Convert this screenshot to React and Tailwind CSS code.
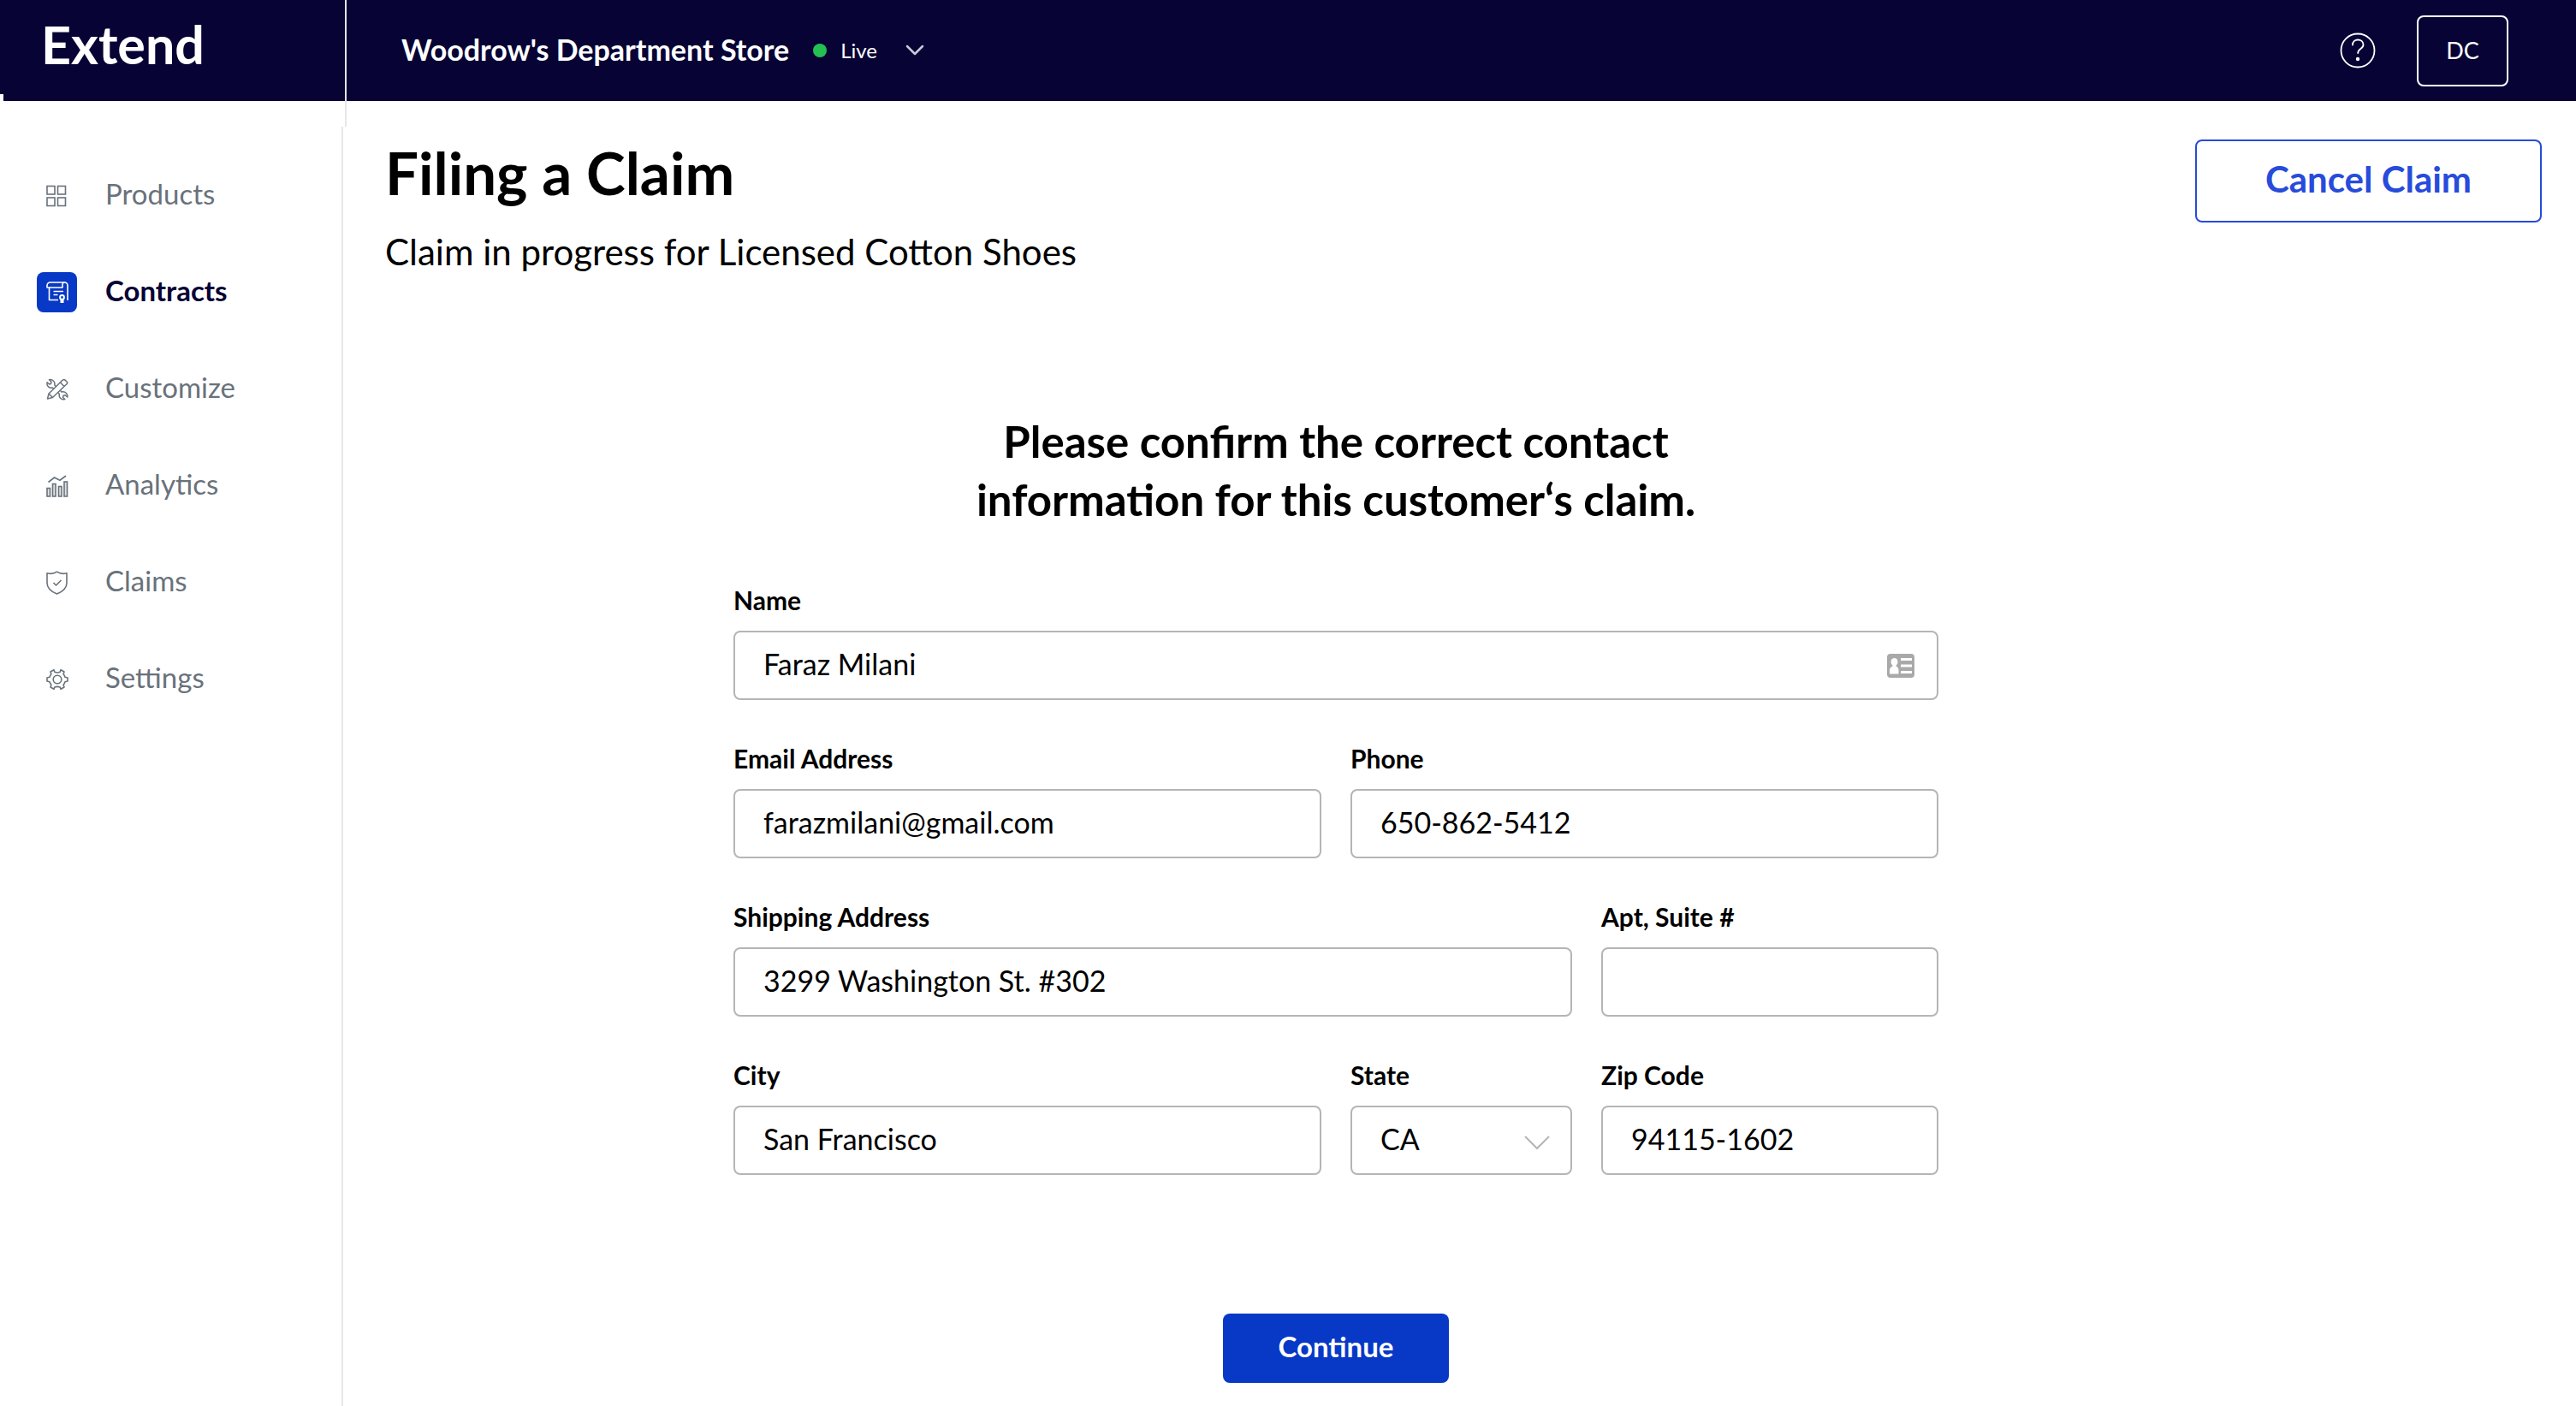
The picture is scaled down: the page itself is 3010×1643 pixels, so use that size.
import { useState } from 'react'

function ProductsIcon() {
  return (
    <svg width="26" height="26" viewBox="0 0 26 26" fill="none" stroke="currentColor" strokeWidth="1.600" aria-hidden="true">
      <rect x="1" y="1.500" width="9" height="9.500" />
      <rect x="13.500" y="1.500" width="9" height="9.500" />
      <rect x="1" y="15" width="9" height="9.500" />
      <rect x="13.500" y="15" width="9" height="9.500" />
    </svg>
  )
}

function ContractsIcon() {
  return (
    <svg width="26" height="26" viewBox="0 0 26 26" fill="none" stroke="currentColor" strokeWidth="1.600" strokeLinejoin="round" aria-hidden="true">
      <path d="M3.500 7H1V4.500A3.500 3.500 0 0 1 4.500 1h17A3.500 3.500 0 0 1 25 4.500V22" />
      <path d="M21.500 1a2.500 2.500 0 0 0-2.500 2.500V7H3.500v14.500H14" />
      <path d="M8.500 11.500h11.500M8.500 15.500h5" />
      <circle cx="18.500" cy="18.500" r="2.400" strokeWidth="2" />
      <path d="M17.500 21v4M19.500 21v4" strokeWidth="2" />
    </svg>
  )
}

function CustomizeIcon() {
  return (
    <svg width="26" height="26" viewBox="0 0 26 26" fill="none" stroke="currentColor" strokeWidth="1.500" strokeLinejoin="round" aria-hidden="true">
      <path d="M1.500 24l1.500-6L18 3.200l1.800-1.400c.8-.5 1.500-.4 2.200.3l2.200 2.200c.7.700.7 1.500 0 2.200L7.500 22.500z" />
      <path d="M16.500 5l4.500 4.500M3 18l4.500 4.500" />
      <path d="M11.300 9.500L9.800 8c.4-2-.1-3.800-1.500-5C6.800 1.500 4.800 1.300 3.500 1.700L6 4.200 5.500 6.500 3.500 7 1.200 4.800C.6 6.800 1.300 9 2.800 10.200c1.300 1 3 1.300 4.500.8l1.500 1.300" />
      <path d="M16.500 14.500l1.500 1.500c2-.4 4 0 5.200 1.300 1.500 1.400 1.900 3.200 1.500 4.700L22.200 19.700l-2.200.500-.5 2 2.300 2.300c-2 .6-4.200 0-5.500-1.500-1.100-1.300-1.300-3-.8-4.500L14 17" />
    </svg>
  )
}

function AnalyticsIcon() {
  return (
    <svg width="26" height="26" viewBox="0 0 26 26" fill="none" stroke="currentColor" strokeWidth="1.600" aria-hidden="true">
      <path d="M2.500 8.500L9.500 3l6.500 3.200L23 1" />
      <g fill="#dfe1e3">
        <rect x="1" y="15.500" width="3.500" height="9.500" />
        <rect x="7.500" y="10.500" width="3.500" height="14.500" />
        <rect x="14.500" y="13.500" width="3.500" height="11.500" />
        <rect x="21" y="8" width="3.500" height="17" />
      </g>
    </svg>
  )
}

function ClaimsIcon() {
  return (
    <svg width="26" height="28" viewBox="0 0 26 28" fill="none" stroke="currentColor" strokeWidth="1.600" strokeLinejoin="round" aria-hidden="true">
      <path d="M12.500 1.200c-3 2-7.500 2.600-11.500 1.600V14c0 6 5 10.500 11.500 13C19 24.500 24 20 24 14V2.800c-4 1-8.500.4-11.500-1.600z" />
      <path d="M8.500 14l3 3 6-6" />
    </svg>
  )
}

function SettingsIcon() {
  return (
    <svg width="26" height="26" viewBox="0 0 26 26" fill="none" stroke="currentColor" strokeWidth="1.600" strokeLinejoin="round" aria-hidden="true">
      <path d="M9.800 4.300L9 1.700 5 4l.9 2.700C5 7.700 4.400 8.800 4 10.300L1 11v4l3 .7c.4 1.500 1 2.600 1.900 3.600L5 22l4 2.300.8-2.300c2-.8 4.400-.8 6.400 0l.8 2.300L21 22l-.9-2.700c.9-1 1.500-2.100 1.900-3.600l3-.7v-4l-3-.7c-.4-1.500-1-2.600-1.900-3.600L21 4l-4-2.300-.8 2.600c-2 .8-4.400.8-6.400 0z" />
      <circle cx="13" cy="13" r="4.800" />
    </svg>
  )
}

function HelpIcon() {
  return (
    <svg width="42" height="42" viewBox="0 0 42 42" fill="none" stroke="currentColor" strokeWidth="1.800" strokeLinecap="round" aria-hidden="true">
      <circle cx="21" cy="21" r="19.500" />
      <path d="M15 14.500c0-4 3-6 6.200-6s6.300 2 6.300 5.700c0 5.300-6.300 4.300-6.300 9.800" />
      <circle cx="21" cy="31" r="1.300" fill="currentColor" />
    </svg>
  )
}

function ContactCardIcon() {
  return (
    <svg width="32" height="28" viewBox="0 0 32 28" aria-hidden="true">
      <rect width="32" height="28" rx="4" fill="#a9a9a9" />
      <g fill="#fff">
        <ellipse cx="8.500" cy="9.500" rx="4" ry="4.500" />
        <path d="M6.500 12h4v2.500c2 .8 3 2.500 3 5V23.500H3V19.500c0-2.500 1.300-4.200 3.500-5z" />
        <rect x="16" y="5" width="13" height="3" />
        <rect x="16" y="12.500" width="13" height="3" />
        <rect x="16" y="20" width="13" height="3" />
      </g>
    </svg>
  )
}

const navItems = [
  { label: 'Products', icon: ProductsIcon },
  { label: 'Contracts', icon: ContractsIcon, active: true },
  { label: 'Customize', icon: CustomizeIcon },
  { label: 'Analytics', icon: AnalyticsIcon },
  { label: 'Claims', icon: ClaimsIcon },
  { label: 'Settings', icon: SettingsIcon }
]

const inputClass =
  'block w-full h-[81px] px-[33px] pb-1 rounded-lg border-2 border-[#b5b5b5] bg-white text-[34px] text-black'

function Field({ id, label, className, children, ...props }) {
  return (
    <div className={className}>
      <label htmlFor={id} className="block h-[54px] text-[30px] leading-[36px] font-bold">
        {label}
      </label>
      <div className="relative">
        {children || <input id={id} className={inputClass} {...props} />}
      </div>
    </div>
  )
}

function Header() {
  return (
    <header className="flex text-white">
      <div className="w-1 h-[110px] bg-[#070435]" />
      <div className="w-[401px] h-[118px] shrink-0 border-r-2 border-[#e1e3e8] bg-[#070435] pl-11">
        <a href="#" className="block pt-4 text-[61px] leading-[72px] font-bold">Extend</a>
      </div>
      <div className="flex-1 h-[118px] bg-[#070435] flex items-center justify-between pl-16 pr-[79px]">
        <button className="flex items-center">
          <span className="pb-1 text-[34px] font-bold">Woodrow's Department Store</span>
          <span className="ml-7 mr-4 size-4 rounded-full bg-[#25c052]" />
          <span className="text-[24px]">Live</span>
          <svg className="ml-8" width="24" height="14" viewBox="0 0 24 14" fill="none" stroke="#c9cbd8" strokeWidth="2.500" strokeLinecap="round" strokeLinejoin="round" aria-hidden="true">
            <path d="M3 2l9 9 9-9" />
          </svg>
        </button>
        <div className="flex items-center gap-12">
          <button aria-label="Help">
            <HelpIcon />
          </button>
          <button className="w-[107px] h-[83px] rounded-lg border-2 border-white text-[27px]">DC</button>
        </div>
      </div>
    </header>
  )
}

function Sidebar() {
  return (
    <aside className="w-[405px] shrink-0 flex flex-col">
      <div className="h-[30px] border-r-2 border-[#e6e7eb]" />
      <nav className="flex-1 w-[401px] pt-6 border-r-2 border-[#e6e7eb]">
        {navItems.map(({ label, icon: Icon, active }) => (
          <a
            key={label}
            href="#"
            className={
              active
                ? 'flex items-center h-[113px] pl-[43px] text-[33px] font-bold text-[#070435]'
                : 'flex items-center h-[113px] pl-[43px] text-[33px] text-[#69727b]'
            }
          >
            <span
              className={
                active
                  ? 'flex items-center justify-center size-[47px] mr-[33px] rounded-lg bg-[#0838c6] text-white'
                  : 'flex items-center justify-center size-[47px] mr-[33px]'
              }
            >
              <Icon />
            </span>
            <span className="pb-1">{label}</span>
          </a>
        ))}
      </nav>
    </aside>
  )
}

function ContactForm() {
  const [form, setForm] = useState({
    name: 'Faraz Milani',
    email: 'farazmilani@gmail.com',
    phone: '650-862-5412',
    address: '3299 Washington St. #302',
    apt: '',
    city: 'San Francisco',
    state: 'CA',
    zip: '94115-1602'
  })

  const bind = (key) => ({
    id: key,
    value: form[key],
    onChange: (e) => setForm({ ...form, [key]: e.target.value })
  })

  return (
    <form className="w-full max-w-[1408px] mx-auto" onSubmit={(e) => e.preventDefault()}>
      <h2 className="text-center text-[51px] leading-[68px] font-bold">
        Please confirm the correct contact
        <br />
        information for this customer‘s claim.
      </h2>

      <div className="mt-[65px] grid grid-cols-[687fr_259fr_394fr] gap-x-[34px] gap-y-[50px]">
        <Field label="Name" id="name" className="col-span-3">
          <input className={inputClass} {...bind('name')} />
          <span className="absolute right-7 top-[27px]">
            <ContactCardIcon />
          </span>
        </Field>
        <Field label="Email Address" type="email" {...bind('email')} />
        <Field label="Phone" type="tel" className="col-span-2" {...bind('phone')} />
        <Field label="Shipping Address" className="col-span-2" {...bind('address')} />
        <Field label="Apt, Suite #" {...bind('apt')} />
        <Field label="City" {...bind('city')} />
        <Field label="State" id="state">
          <select className={`${inputClass} appearance-none`} {...bind('state')}>
            <option>CA</option>
            <option>NY</option>
            <option>WA</option>
          </select>
          <svg className="absolute right-[26px] top-[34px] pointer-events-none" width="30" height="18" viewBox="0 0 30 18" fill="none" stroke="#b5b5b5" strokeWidth="2" aria-hidden="true">
            <path d="M1 2l14 14L29 2" />
          </svg>
        </Field>
        <Field label="Zip Code" {...bind('zip')} />
      </div>

      <button
        type="submit"
        className="block mx-auto mt-[162px] w-[264px] h-[81px] pb-1 rounded-lg bg-[#0838c6] text-[33px] font-bold text-white"
      >
        Continue
      </button>
    </form>
  )
}

export default function App() {
  return (
    <div className="min-h-screen flex flex-col bg-white text-black font-['Lato',sans-serif]">
      <Header />
      <div className="flex-1 flex">
        <Sidebar />
        <main className="flex-1 pl-[45px] pr-10 pt-[45px]">
          <div className="flex items-start justify-between">
            <div>
              <h1 className="text-[69px] leading-[78px] font-bold">Filing a Claim</h1>
              <p className="mt-[27px] text-[42px] leading-[52px]">Claim in progress for Licensed Cotton Shoes</p>
            </div>
            <button className="w-[405px] h-[97px] pb-1 rounded-lg border-2 border-[#274bdb] text-[42px] font-bold text-[#274bdb]">
              Cancel Claim
            </button>
          </div>
          <div className="mt-[162px] pr-[298px]">
            <ContactForm />
          </div>
        </main>
      </div>
    </div>
  )
}
